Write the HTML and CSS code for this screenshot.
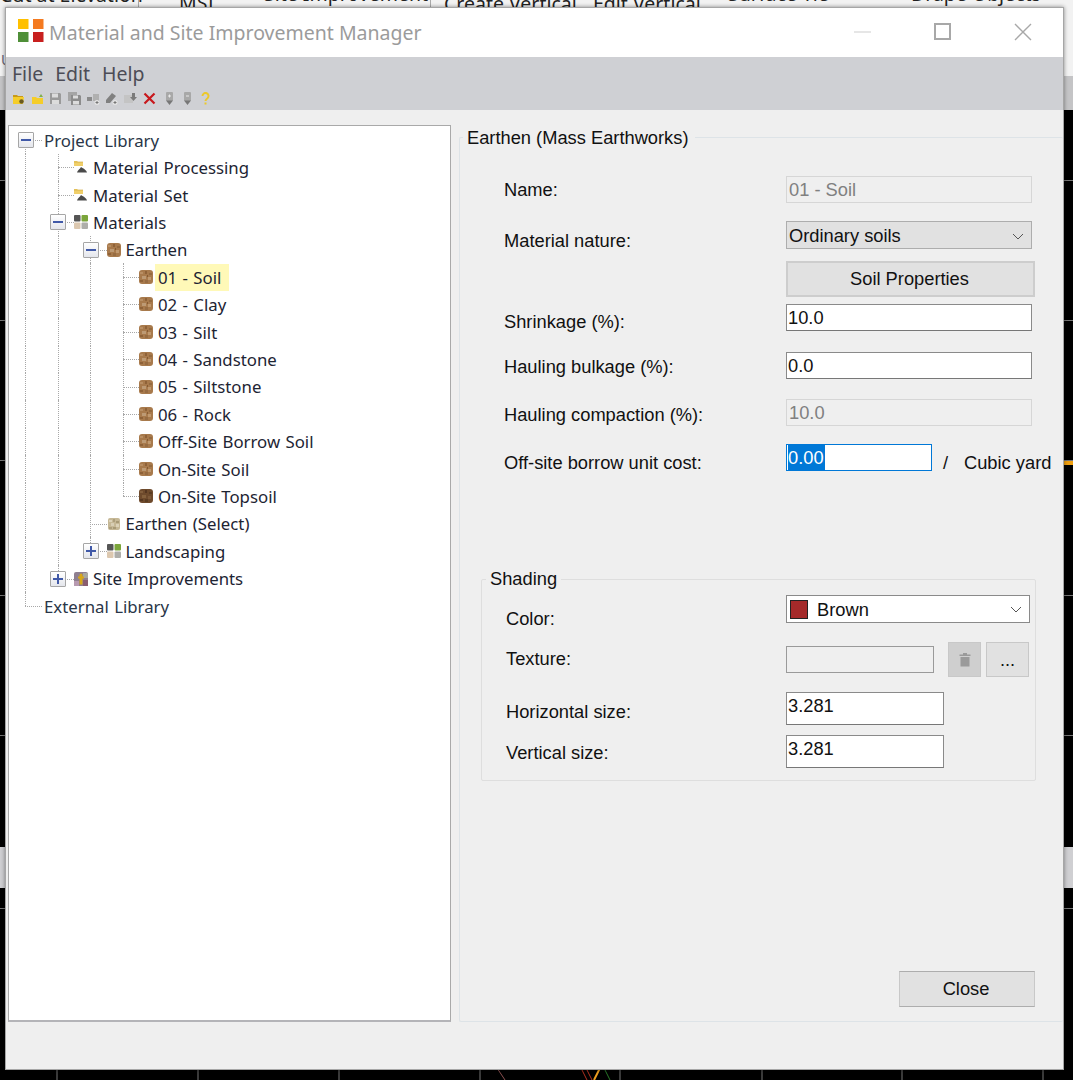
FILE: index.html
```html
<!DOCTYPE html>
<html lang="en">
<head>
<meta charset="utf-8">
<title>Material and Site Improvement Manager</title>
<link rel="stylesheet" href="styles.css">
</head>
<body>
<svg class="defs" width="0" height="0" aria-hidden="true">
  <defs>
    <symbol id="soil" viewBox="0 0 14 14">
      <rect width="14" height="14" rx="3" fill="#a87a4c"/>
      <rect x="1" y="2" width="3" height="2" fill="#b98f64"/><rect x="6" y="1" width="2" height="3" fill="#8f6238"/>
      <rect x="10" y="3" width="3" height="2" fill="#946a40"/><rect x="3" y="6" width="4" height="3" fill="#bd9a74"/>
      <rect x="9" y="7" width="3" height="3" fill="#c0996f"/><rect x="1" y="10" width="3" height="2" fill="#8f6238"/>
      <rect x="6" y="10" width="3" height="3" fill="#976c42"/><rect x="8" y="5" width="1" height="2" fill="#855a32"/>
    </symbol>
    <symbol id="topsoil" viewBox="0 0 14 14">
      <rect width="14" height="14" rx="3" fill="#6e4a2c"/>
      <rect x="1" y="2" width="3" height="2" fill="#825e3c"/><rect x="6" y="1" width="2" height="3" fill="#553620"/>
      <rect x="10" y="3" width="3" height="2" fill="#5a3c22"/><rect x="3" y="6" width="4" height="3" fill="#84603c"/>
      <rect x="9" y="7" width="3" height="3" fill="#7e5a3a"/><rect x="1" y="10" width="3" height="2" fill="#553620"/>
      <rect x="6" y="10" width="3" height="3" fill="#5a3c22"/>
    </symbol>
    <symbol id="select" viewBox="0 0 14 14">
      <rect x="1" y="1" width="12" height="12" rx="2" fill="#c6b896"/>
      <rect x="2" y="3" width="3" height="2" fill="#dcd2b8"/><rect x="6" y="2" width="2" height="3" fill="#ad9f7c"/>
      <rect x="9" y="4" width="3" height="2" fill="#a89a76"/><rect x="4" y="6" width="3" height="3" fill="#d8ceb4"/>
      <rect x="9" y="7" width="3" height="3" fill="#dcd2b8"/><rect x="2" y="10" width="3" height="2" fill="#ad9f7c"/>
      <rect x="6" y="10" width="3" height="2" fill="#a89a76"/>
    </symbol>
    <symbol id="quad" viewBox="0 0 14 14">
      <rect width="6.500" height="6.500" rx="1" fill="#555"/><rect x="7.500" width="6.500" height="6.500" rx="1" fill="#7ba53a"/>
      <rect y="7.500" width="6.500" height="6.500" rx="1" fill="#dcc8b0"/><rect x="7.500" y="7.500" width="6.500" height="6.500" rx="1" fill="#aeaeaa"/>
    </symbol>
    <symbol id="process" viewBox="0 0 14 14">
      <path d="M0 1h3l1 1h5v4H0z" fill="#f0cf6a"/>
      <path d="M0 2h9" stroke="#c9a238" stroke-width=".6"/>
      <path d="M3 12.500c.5-2 2-3 3-4l1-1.500 1.500 1c2 1 4 2.500 4.500 4.500z" fill="#4a4a4a"/>
    </symbol>
    <symbol id="site" viewBox="0 0 14 14">
      <rect width="14" height="14" rx="2" fill="#8f7f90"/>
      <rect x="0" y="9" width="5" height="5" fill="#b79ab0"/><rect x="9" y="1" width="5" height="5" fill="#a8a8a0"/>
      <rect x="9" y="8" width="5" height="6" fill="#8a5e70"/>
      <path d="M7 1.500a1.500 1.500 0 0 1 1.500 1.500v1.500h1.500v2h-1.500v6h-3v-6h-1.500v-2h1.500V3A1.500 1.500 0 0 1 7 1.500z" fill="#d8a818"/>
    </symbol>
  </defs>
</svg>

<div class="desktop">
  <div class="ribbon">
    <span class="tab t1">Cut at Elevation</span>
    <span class="tab t2">MSI</span>
    <span class="tab t3">Site Improvement</span>
    <span class="tab t4">Create Vertical</span>
    <span class="tab t5">Edit Vertical</span>
    <span class="tab t6">Surface Tie</span>
    <span class="tab t7">Drape Objects</span>
  </div>
  <span class="stray">U</span>
  <div class="band band-a"></div>
  <div class="band band-b"></div>
  <div class="grid-h g180"></div>
  <div class="grid-h g320"></div>
  <div class="grid-h g460"></div>
  <div class="grid-h g595"></div>
  <div class="grid-h g735"></div>
  <div class="grid-h g908"></div>
  <div class="accent"></div>
  <svg class="plot" width="1073" height="12" viewBox="0 0 1073 12" aria-hidden="true">
    <path d="M57 2v10M198 2v10M339 2v10M480 2v10M620 2v10M762 2v10M902 2v10M1043 2v10" stroke="#777" stroke-width="1"/>
    <path d="M497 0l8 12" stroke="#8a5050" stroke-width="1"/>
    <path d="M581 0l6 12M586 0l6 12" stroke="#b03020" stroke-width="1"/>
    <path d="M600 0l-6 12" stroke="#f0a020" stroke-width="2"/>
    <path d="M604 0l6 12" stroke="#2a7a2a" stroke-width="1"/>
  </svg>

  <main class="window">
    <header class="titlebar">
      <svg class="logo" width="26" height="24" viewBox="0 0 26 24" aria-hidden="true">
        <rect width="10.500" height="10" fill="#ffc000"/><rect x="15" width="10.500" height="10" fill="#f47a20"/>
        <rect y="13" width="10.500" height="10" fill="#4f8f38"/><rect x="15" y="13" width="10.500" height="10" fill="#c8201f"/>
      </svg>
      <h1 class="title">Material and Site Improvement Manager</h1>
      <div class="winbtns">
        <svg width="18" height="18" viewBox="0 0 18 18" aria-hidden="true"><path d="M0 9h17" stroke="#dedede" stroke-width="1.500"/></svg>
        <svg width="18" height="18" viewBox="0 0 18 18" aria-hidden="true"><rect x="1" y="1" width="15" height="15" fill="none" stroke="#a8a8a8" stroke-width="2"/></svg>
        <svg width="18" height="18" viewBox="0 0 18 18" aria-hidden="true"><path d="M1 1l16 16M17 1L1 17" stroke="#a8a8a8" stroke-width="1.400"/></svg>
      </div>
    </header>

    <div class="menuarea">
      <nav class="menu"><span>File</span><span>Edit</span><span>Help</span></nav>
      <div class="tools">
        <svg viewBox="0 0 13 13" aria-hidden="true"><path d="M1 3h4l1 1h5v2H1z" fill="#c89a18"/><path d="M1 5h11l-1 7H1z" fill="#f5cd2a"/><circle cx="9.500" cy="9.500" r="2.200" fill="#6a5a20"/></svg>
        <svg viewBox="0 0 13 13" aria-hidden="true"><path d="M1 5h4l1 1h6v6H1z" fill="#f5cd2a"/><path d="M8 5l2-3 2 3z" fill="#7fb04a"/></svg>
        <svg viewBox="0 0 13 13" aria-hidden="true"><path d="M1 1h10l1 1v10H1z" fill="#9a9a9a"/><rect x="3" y="1.500" width="6" height="4" fill="#dcdcdc"/><rect x="3" y="8" width="7" height="4" fill="#dcdcdc"/></svg>
        <svg viewBox="0 0 13 13" aria-hidden="true"><path d="M0 0h9v9H0z" fill="#a5a5a5"/><path d="M3 3h9l1 1v9H3z" fill="#8c8c8c"/><rect x="5" y="3.500" width="5" height="3" fill="#dcdcdc"/><rect x="5" y="9" width="6" height="3.500" fill="#dcdcdc"/></svg>
        <svg viewBox="0 0 13 13" aria-hidden="true"><rect y="5" width="5" height="4" fill="#8a8a8a"/><rect x="6" y="2" width="6" height="7" fill="#b0b0b0"/><circle cx="10" cy="10.500" r="2.500" fill="#e5e5e5"/><path d="M8.500 10.500h3M10 9v3" stroke="#777"/></svg>
        <svg viewBox="0 0 13 13" aria-hidden="true"><path d="M1 8l6-7 4 3-6 7H1z" fill="#808080"/><circle cx="10" cy="10.500" r="2.500" fill="#e5e5e5"/><path d="M8.500 10.500h3M10 9v3" stroke="#777"/></svg>
        <svg viewBox="0 0 13 13" aria-hidden="true"><rect y="3" width="9" height="8" fill="#c4c4c4"/><path d="M8 1h3v4h2l-3.500 4L6 5h2z" fill="#7a7a7a"/></svg>
        <svg viewBox="0 0 13 13" aria-hidden="true"><path d="M1.500 1.500l10 10M11.500 1.500l-10 10" stroke="#c8181c" stroke-width="2.200"/></svg>
        <svg class="narrow" viewBox="0 0 9 13" aria-hidden="true"><rect x="1" y="0" width="7" height="9" rx="1" fill="#a8a8a8"/><path d="M1 8.500h7L4.500 13z" fill="#777"/><path d="M3 4h3M4.500 2.500v3" stroke="#e8e8e8"/></svg>
        <svg class="narrow" viewBox="0 0 9 13" aria-hidden="true"><rect x="1" y="0" width="7" height="9" rx="1" fill="#a8a8a8"/><path d="M1 8.500h7L4.500 13z" fill="#777"/><path d="M3 4h3" stroke="#e8e8e8"/></svg>
        <svg class="narrow help" viewBox="0 0 9 13" aria-hidden="true"><path d="M1.500 4a3 3 0 1 1 5 2.200C5.200 7.200 4.500 7.600 4.500 9" fill="none" stroke="#ecc82c" stroke-width="2"/><rect x="3.500" y="10.500" width="2" height="2" fill="#ecc82c"/></svg>
      </div>
    </div>

    <div class="content">
      <section class="tree">
        <div class="row"><span class="elbow first"><i class="toggle"></i></span><span class="text root">Project Library</span></div>
        <div class="row"><span class="guide"></span><span class="elbow tee"></span><svg class="ico"><use href="#process"/></svg><span class="text">Material Processing</span></div>
        <div class="row"><span class="guide"></span><span class="elbow tee"></span><svg class="ico"><use href="#process"/></svg><span class="text">Material Set</span></div>
        <div class="row"><span class="guide"></span><span class="elbow tee"><i class="toggle"></i></span><svg class="ico"><use href="#quad"/></svg><span class="text">Materials</span></div>
        <div class="row"><span class="guide"></span><span class="guide"></span><span class="elbow tee"><i class="toggle"></i></span><svg class="ico"><use href="#soil"/></svg><span class="text">Earthen</span></div>
        <div class="row"><span class="guide"></span><span class="guide"></span><span class="guide"></span><span class="elbow tee"></span><svg class="ico"><use href="#soil"/></svg><span class="text selected">01 - Soil</span></div>
        <div class="row"><span class="guide"></span><span class="guide"></span><span class="guide"></span><span class="elbow tee"></span><svg class="ico"><use href="#soil"/></svg><span class="text">02 - Clay</span></div>
        <div class="row"><span class="guide"></span><span class="guide"></span><span class="guide"></span><span class="elbow tee"></span><svg class="ico"><use href="#soil"/></svg><span class="text">03 - Silt</span></div>
        <div class="row"><span class="guide"></span><span class="guide"></span><span class="guide"></span><span class="elbow tee"></span><svg class="ico"><use href="#soil"/></svg><span class="text">04 - Sandstone</span></div>
        <div class="row"><span class="guide"></span><span class="guide"></span><span class="guide"></span><span class="elbow tee"></span><svg class="ico"><use href="#soil"/></svg><span class="text">05 - Siltstone</span></div>
        <div class="row"><span class="guide"></span><span class="guide"></span><span class="guide"></span><span class="elbow tee"></span><svg class="ico"><use href="#soil"/></svg><span class="text">06 - Rock</span></div>
        <div class="row"><span class="guide"></span><span class="guide"></span><span class="guide"></span><span class="elbow tee"></span><svg class="ico"><use href="#soil"/></svg><span class="text">Off-Site Borrow Soil</span></div>
        <div class="row"><span class="guide"></span><span class="guide"></span><span class="guide"></span><span class="elbow tee"></span><svg class="ico"><use href="#soil"/></svg><span class="text">On-Site Soil</span></div>
        <div class="row"><span class="guide"></span><span class="guide"></span><span class="guide"></span><span class="elbow"></span><svg class="ico"><use href="#topsoil"/></svg><span class="text">On-Site Topsoil</span></div>
        <div class="row"><span class="guide"></span><span class="guide"></span><span class="elbow tee"></span><svg class="ico"><use href="#select"/></svg><span class="text">Earthen (Select)</span></div>
        <div class="row"><span class="guide"></span><span class="guide"></span><span class="elbow"><i class="toggle plus"></i></span><svg class="ico"><use href="#quad"/></svg><span class="text">Landscaping</span></div>
        <div class="row"><span class="guide"></span><span class="elbow"><i class="toggle plus"></i></span><svg class="ico"><use href="#site"/></svg><span class="text">Site Improvements</span></div>
        <div class="row"><span class="elbow"></span><span class="text root">External Library</span></div>
      </section>

      <fieldset class="group">
        <legend class="group-title">Earthen (Mass Earthworks)</legend>
        <div class="frow r-name"><label class="lb">Name:</label><div class="field disabled wide">01 - Soil</div></div>
        <div class="frow r-nature"><label class="lb n6">Material nature:</label><div class="combo wide grey"><span>Ordinary soils</span><svg class="chev" viewBox="0 0 12 7" aria-hidden="true"><path d="M1 1l5 5 5-5" fill="none" stroke="#555" stroke-width="1"/></svg></div></div>
        <div class="frow r-btn"><span class="lb"></span><button class="btn soil">Soil Properties</button></div>
        <div class="frow r-shrink"><label class="lb n4">Shrinkage (%):</label><div class="field wide">10.0</div></div>
        <div class="frow r-bulk"><label class="lb n1">Hauling bulkage (%):</label><div class="field wide">0.0</div></div>
        <div class="frow r-comp"><label class="lb n2">Hauling compaction (%):</label><div class="field disabled wide">10.0</div></div>
        <div class="frow r-cost"><label class="lb n5">Off-site borrow unit cost:</label><div class="field focus"><span class="sel">0.00</span></div><span class="slash">/</span><span class="unit">Cubic yard</span></div>

        <fieldset class="shading">
          <legend class="shade-title">Shading</legend>
          <div class="srow s-color"><label class="slb n10">Color:</label><div class="combo white"><span class="swatch"></span><span>Brown</span><svg class="chev" viewBox="0 0 12 7" aria-hidden="true"><path d="M1 1l5 5 5-5" fill="none" stroke="#555" stroke-width="1"/></svg></div></div>
          <div class="srow s-tex"><label class="slb up1">Texture:</label><div class="field disabled tex"></div><button class="tbtn trash" aria-label="Delete"><svg width="12" height="15" viewBox="0 0 12 15" aria-hidden="true"><path d="M4 1h4v1.500h3.500V4H.5V2.500H4zM1.500 5h9v9.500h-9z" fill="#9a9a9a"/></svg></button><button class="tbtn more">...</button></div>
          <div class="srow s-h"><label class="slb n3">Horizontal size:</label><div class="field size">3.281</div></div>
          <div class="srow s-v"><label class="slb n1">Vertical size:</label><div class="field size">3.281</div></div>
        </fieldset>

        <div class="actions"><button class="btn close">Close</button></div>
      </fieldset>
    </div>
  </main>
</div>
</body>
</html>
```

FILE: styles.css
```css
* { box-sizing: border-box; }
html, body { margin: 0; padding: 0; }
body { width: 1073px; height: 1080px; overflow: hidden; background: #000; font-family: "Liberation Sans", Arial, sans-serif; }
.defs { position: absolute; }

.desktop { position: relative; width: 1073px; height: 1080px; overflow: hidden; background: #000; }

/* application behind the dialog */
.ribbon { display: flex; align-items: flex-start; height: 76px; background: #f2f2f2; font: 19.500px/26px "Noto Sans", sans-serif; color: #222; }
.tab { flex: none; white-space: nowrap; }
.t1 { width: 138px; margin-top: -18px; text-align: right; }
.t2 { width: 126px; margin-top: -10px; padding-left: 40px; border-left: 1px solid #aaa; height: 34px; }
.t3 { width: 166px; margin-top: -19px; }
.t4 { width: 163px; margin-top: -9px; padding-left: 13px; border-left: 1px solid #aaa; height: 34px; }
.t5 { width: 135px; margin-top: -9px; }
.t6 { width: 183px; margin-top: -19px; }
.t7 { width: 150px; margin-top: -19px; }
.stray { position: absolute; left: 1px; top: 51px; font: 14px/18px "Noto Sans", sans-serif; color: #667; }
.band { position: absolute; left: 0; width: 1073px; background: #c4c4c6; }
.band-a { top: 76px; height: 34px; }
.band-b { top: 847px; height: 41px; background: #cfcfd2; }
.grid-h { position: absolute; left: 0; width: 1073px; height: 1px; background: #777; }
.g180 { top: 180px; } .g320 { top: 320px; } .g460 { top: 460px; } .g595 { top: 595px; } .g735 { top: 735px; } .g908 { top: 908px; }
.accent { position: absolute; left: 1060px; top: 461px; width: 13px; height: 4px; background: #f0a010; }
.plot { position: absolute; left: 0; top: 1068px; }

/* dialog window */
.window { position: absolute; left: 5px; top: 7px; width: 1059px; height: 1063px; display: flex; flex-direction: column; background: #efefef; border: 1px solid #a6a6a6; box-shadow: 0 0 4px rgba(0,0,0,.45); }
.titlebar { flex: none; height: 49px; display: flex; align-items: center; background: #fff; padding-left: 12px; }
.logo { flex: none; margin-bottom: 3px; }
.title { margin: 0 0 0 5px; font: 400 19.500px/28px "Noto Sans", sans-serif; color: #9b9b9b; white-space: nowrap; }
.winbtns { margin-left: auto; margin-right: 31px; display: flex; gap: 62px; margin-bottom: 2px; }
.menuarea { flex: none; height: 53px; background: #cfd0d4; padding: 4px 0 0 6px; }
.menu { display: flex; gap: 12px; height: 26px; font: 19.500px/26px "Noto Sans", sans-serif; color: #4c4c56; }
.tools { display: flex; align-items: center; gap: 5.700px; height: 14px; margin-top: 4px; }
.tools svg { width: 13px; height: 13px; flex: none; }
.tools svg.narrow { width: 9px; margin: 0 1px 0 3px; }
.tools svg.help { margin-left: 2px; }

.content { flex: 1; display: flex; align-items: flex-start; padding: 15px 0 0 2px; gap: 8px; }

/* tree */
.tree { flex: none; width: 443px; height: 897px; background: #fff; border: 1px solid #a9a9a9; border-bottom: 2px solid #b4b4b8; padding-top: .3px; font: 16.800px/24px "Noto Sans", sans-serif; word-spacing: 1px; color: #1d2433; }
.row { display: flex; align-items: center; height: 27.410px; }
.guide, .elbow { position: relative; flex: none; width: 32.500px; height: 100%; }
.guide::before, .elbow::before { content: ""; position: absolute; left: 16px; top: 0; bottom: 0; border-left: 1px dotted #a8a8a8; }
.elbow::before { bottom: 50%; }
.elbow.tee::before { bottom: 0; }
.elbow.first::before { top: 50%; bottom: 0; }
.elbow::after { content: ""; position: absolute; left: 16px; right: 0; top: 50%; border-top: 1px dotted #a8a8a8; }
.toggle { position: absolute; z-index: 1; left: 8.500px; top: 50%; width: 16px; height: 16px; margin-top: -8px; background: linear-gradient(#fff, #e4e6ec); border: 1px solid #a6a6a6; border-radius: 1px; }
.toggle::before { content: ""; position: absolute; left: 2px; right: 2px; top: 6px; height: 2px; background: #4059a8; }
.toggle.plus::after { content: ""; position: absolute; top: 2px; bottom: 2px; left: 6px; width: 2px; background: #4059a8; }
.ico { flex: none; width: 14px; height: 14px; margin-right: 2px; }
.text { white-space: nowrap; padding: 2.200px 7px .8px 3px; }
.text.root { padding-left: 2.500px; color: #2a3648; }
.selected { background: #fff9b8; padding-right: 8px; }

/* property group */
.group { flex: 1; min-width: 0; height: 897px; margin: 0; padding: 0; border: 1px solid #dde3e7; border-right: 0; border-radius: 2px; font-size: 18.300px; }
.group-title { margin-left: 3px; padding: 0 7px 0 4px; line-height: 25px; color: #111; }
.frow { display: flex; align-items: center; width: 560px; margin-left: 44px; }
.lb { flex: none; width: 282px; color: #111; white-space: nowrap; }
.n1 { margin-top: 2px; } .n2 { margin-top: 4px; } .n3 { margin-top: 6px; } .n4 { margin-top: 8px; } .n5 { margin-top: 10px; } .n6 { margin-top: 12px; } .n10 { margin-top: 20px; } .up1 { margin-top: -2px; }
.r-name { height: 27px; margin-top: 26px; }
.r-nature { height: 28px; margin-top: 18px; }
.r-btn { height: 36px; margin-top: 12px; }
.r-shrink { height: 27px; margin-top: 7px; }
.r-bulk { height: 27px; margin-top: 21px; }
.r-comp { height: 27px; margin-top: 20px; }
.r-cost { height: 27px; margin-top: 18px; }

.field { flex: none; height: 27px; background: #fff; border: 1px solid #8a8a8a; border-bottom-color: #777; padding-left: 1px; line-height: 25px; color: #111; }
.wide { width: 246px; }
.disabled { background: #efefef; border-color: #d6d6d6; color: #808080; padding-left: 2px; }
.focus { width: 146px; border-color: #0078d7; padding-left: 1px; }
.sel { display: inline-block; background: #0078d7; color: #fff; height: 25px; padding-right: 1px; }
.slash { margin-left: 11px; width: 21px; margin-top: 10px; color: #111; }
.unit { margin-top: 10px; color: #111; white-space: nowrap; }

.combo { flex: none; display: flex; align-items: center; height: 28px; border: 1px solid #adadad; color: #111; padding: 1px 0 0 2px; }
.combo.grey { background: #e1e1e1; padding-top: 2px; }
.combo.white { width: 244px; background: #fff; border-color: #8a8a8a; }
.chev { width: 12px; height: 7px; margin-left: auto; margin-right: 7px; }
.swatch { width: 18px; height: 19px; margin: -1px 9px 0 1px; background: #a52a2a; border: 1px solid #222; }

.btn { display: block; background: #e1e1e1; font-family: inherit; font-size: 18.300px; color: #111; padding: 0 2px 0 0; }
.soil { width: 249px; height: 36px; border: 2px solid #cdcdcd; }
.close { width: 136px; height: 36px; border: 1px solid #adadad; border-left-color: #c8c8c8; border-right-color: #c8c8c8; }
.actions { display: flex; justify-content: flex-end; width: 575px; margin-top: 190px; }

/* shading */
.shading { width: 555px; height: 213px; margin: 97px 0 0 21px; padding: 0; border: 1px solid #dedede; border-radius: 2px; min-inline-size: 0; }
.shade-title { margin-left: 4px; padding: 0 4px; line-height: 22px; color: #111; }
.srow { display: flex; align-items: center; margin-left: 24px; }
.slb { flex: none; width: 280px; color: #111; white-space: nowrap; }
.s-color { height: 28px; margin-top: 5px; }
.s-tex { height: 35px; margin-top: 19px; }
.s-h { height: 33px; margin-top: 15px; }
.s-v { height: 33px; margin-top: 10px; }
.tex { width: 148px; border-color: #9a9a9a; }
.size { width: 158px; height: 33px; line-height: 26px; }
.tbtn { flex: none; height: 35px; padding: 0; border: 1px solid #c8c8c8; font-size: 18.300px; color: #111; }
.trash { width: 33px; margin-left: 14px; background: #cfcfcf; display: flex; align-items: center; justify-content: center; }
.more { width: 43px; margin-left: 5px; background: #e1e1e1; }
```
